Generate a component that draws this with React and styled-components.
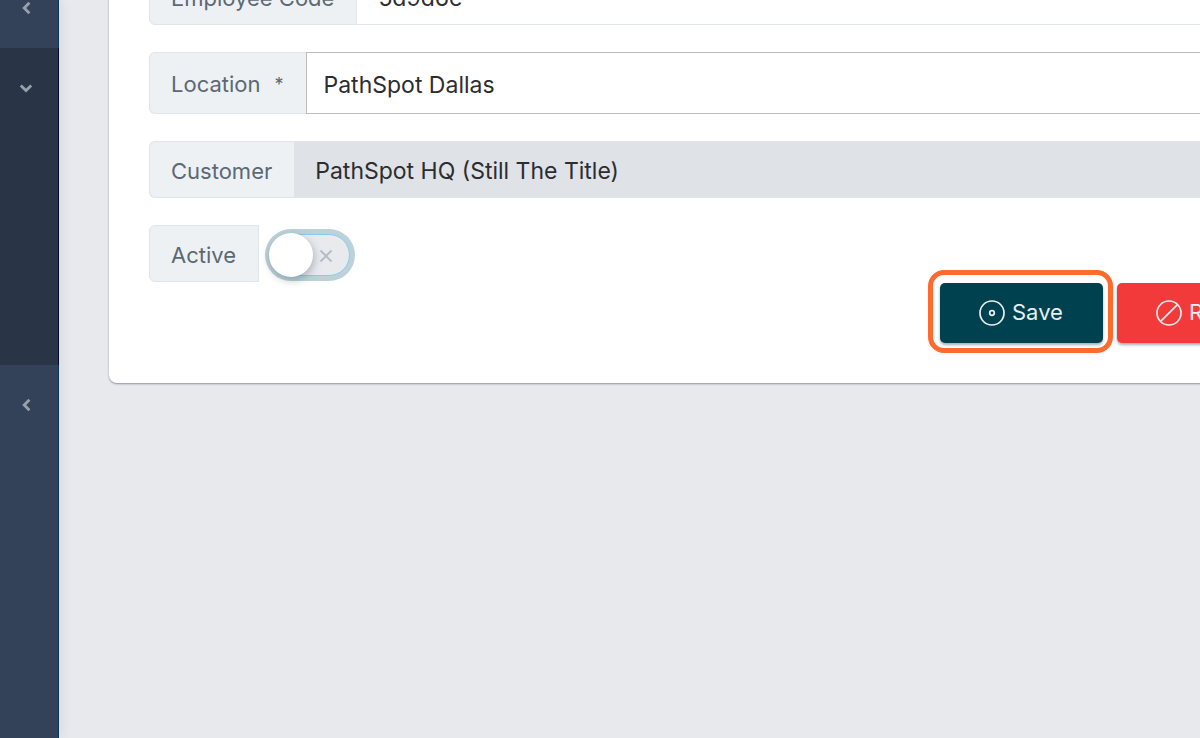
import React from 'react';
import styled, { createGlobalStyle, css } from 'styled-components';

const GlobalStyle = createGlobalStyle`
  * {
    box-sizing: border-box;
  }
  body {
    margin: 0;
    overflow: hidden;
    background-color: #e7e9ed;
    font-family: Inter, "Liberation Sans", sans-serif;
    font-size: 22px;
  }
`;

const Page = styled.div`
  display: flex;
  min-height: 100vh;
`;

const Sidebar = styled.nav`
  display: flex;
  flex-direction: column;
  flex-shrink: 0;
  width: 59px;
  background-color: #344259;
  border-right: 1px solid #0b3552;
  box-shadow: 0 0 12px rgba(60, 75, 100, 0.14);
`;

const SidebarSection = styled.div`
  display: flex;
  flex-direction: column;
  height: ${props => props.height};
  ${props => props.open && css`
    background-color: #2a3447;
    margin-right: -1px;
    border-right: 1px solid #03072b;
  `}
`;

const SidebarToggle = styled.button`
  display: flex;
  align-items: center;
  width: 100%;
  height: 80px;
  padding: 0 0 0 19px;
  border: 0;
  background: none;
  color: #98a0ac;
  flex-shrink: 0;
`;

const UpperSection = styled(SidebarSection)`
  justify-content: flex-end;
`;

const Main = styled.main`
  flex: 1;
  min-width: 0;
  padding-left: 50px;
`;

/* the form is scrolled past its top and right edge */
const Card = styled.form`
  display: flex;
  flex-direction: column;
  gap: 27px;
  margin: -72px -120px 0 0;
  padding: 40px;
  background-color: #fff;
  border-radius: 8px;
  box-shadow: 0 1px 2px rgba(50, 65, 90, 0.5);
`;

const InputGroup = styled.div`
  display: flex;
  height: ${props => (props.tall ? '62px' : '57px')};
`;

const InputLabel = styled.label`
  display: flex;
  align-items: center;
  padding: 2px 22px 0 21px;
  white-space: pre;
  color: #5c6873;
  background-color: #edf1f4;
  border: 1px solid #e0e5e9;
  border-radius: 6px 0 0 6px;
  ${props => props.flush && css`
    border-right: 0;
  `}
`;

const Required = styled.span`
  margin-left: 14px;
  font-size: 18px;
`;

const Input = styled.input`
  flex: 1;
  min-width: 0;
  padding: 2px 21px 0;
  border: 1px solid #e0e5e9;
  border-left: 0;
  border-radius: 0 6px 6px 0;
  background-color: #fff;
  color: #2c2d30;
  font: inherit;
  font-size: 23px;
  &:read-only {
    background-color: #dfe2e7;
  }
`;

const Select = styled.select`
  flex: 1;
  min-width: 0;
  padding: 4px 17px 0;
  appearance: none;
  border: 1px solid #bcbcbc;
  border-radius: 0;
  background-color: #fff;
  color: #2c2d30;
  font: inherit;
  font-size: 23px;
`;

const Switch = styled.span`
  position: relative;
  align-self: center;
  width: 80px;
  height: 42px;
  margin: 2px 0 0 11px;
  border: 1px solid #7fd0f0;
  border-radius: 21px;
  background-color: #e8eaee;
  box-shadow: 0 0 0 5px #bdd2d8;
`;

const SwitchInput = styled.input`
  position: absolute;
  inset: 0;
  width: 100%;
  height: 100%;
  margin: 0;
  opacity: 0;
`;

const SwitchKnob = styled.span`
  position: absolute;
  top: -2px;
  left: -2px;
  width: 44px;
  height: 44px;
  border-radius: 50%;
  background-color: #fff;
  box-shadow: 1px 3px 8px rgba(50, 65, 80, 0.35);
  pointer-events: none;
`;

const SwitchCross = styled.svg`
  position: absolute;
  top: 14px;
  right: 16px;
  pointer-events: none;
`;

const Actions = styled.div`
  display: flex;
  justify-content: flex-end;
  gap: 14px;
  margin-top: -26px;
`;

const Button = styled.button`
  position: relative;
  display: flex;
  align-items: center;
  gap: 7px;
  width: 163px;
  height: 60px;
  padding: 0 0 0 39px;
  border: 0;
  border-radius: 5px;
  background-color: ${props => (props.danger ? '#f23a3a' : '#004150')};
  box-shadow: 0 2px 3px rgba(30, 50, 80, 0.4);
  color: #e9eef0;
  font: inherit;
`;

const ButtonText = styled.span`
  padding-bottom: 3px;
`;

const HighlightRing = styled.span`
  position: absolute;
  inset: -13px -10px -10px -12px;
  border: 5px solid #ff6a2e;
  border-radius: 16px;
  pointer-events: none;
`;

const ChevronLeft = () => (
  <svg width="14" height="14" viewBox="0 0 14 14" fill="none" stroke="currentColor" strokeWidth="2.8">
    <path d="M10.4 1.8 5.2 7l5.2 5.2" />
  </svg>
);

const ChevronDown = () => (
  <svg width="14" height="14" viewBox="0 0 14 14" fill="none" stroke="currentColor" strokeWidth="2.8">
    <path d="M1.8 4.6 7 9.6l5.2-5" />
  </svg>
);

const SaveIcon = () => (
  <svg width="26" height="26" viewBox="0 0 26 26" fill="none" stroke="currentColor" strokeWidth="1.7">
    <circle cx="13" cy="13" r="12" />
    <circle cx="13" cy="13" r="2.3" />
  </svg>
);

const BanIcon = () => (
  <svg width="26" height="26" viewBox="0 0 26 26" fill="none" stroke="currentColor" strokeWidth="1.7">
    <circle cx="13" cy="13" r="12" />
    <path d="M4.8 21.2 21.2 4.8" />
  </svg>
);

const App = () => {
  return (
    <React.Fragment>
      <GlobalStyle />
      <Page>
        <Sidebar>
          <UpperSection height="48px">
            <SidebarToggle aria-label="Expand section"><ChevronLeft /></SidebarToggle>
          </UpperSection>
          <SidebarSection open height="317px">
            <SidebarToggle aria-label="Collapse section"><ChevronDown /></SidebarToggle>
          </SidebarSection>
          <SidebarSection>
            <SidebarToggle aria-label="Expand section"><ChevronLeft /></SidebarToggle>
          </SidebarSection>
        </Sidebar>
        <Main>
          <Card onSubmit={e => e.preventDefault()}>
            <InputGroup>
              <InputLabel htmlFor="code">Employee Code</InputLabel>
              <Input id="code" defaultValue="5d9d6e" />
            </InputGroup>
            <InputGroup tall>
              <InputLabel htmlFor="location" flush>
                Location
                <Required>*</Required>
              </InputLabel>
              <Select id="location">
                <option>PathSpot Dallas</option>
              </Select>
            </InputGroup>
            <InputGroup>
              <InputLabel htmlFor="customer" flush>Customer</InputLabel>
              <Input id="customer" readOnly value="PathSpot HQ (Still The Title)" />
            </InputGroup>
            <InputGroup>
              <InputLabel htmlFor="active">Active</InputLabel>
              <Switch>
                <SwitchInput id="active" type="checkbox" role="switch" />
                <SwitchKnob />
                <SwitchCross width="14" height="14" viewBox="0 0 14 14" stroke="#b5bdc6" strokeWidth="2">
                  <path d="m1.5 1.5 11 11m0-11-11 11" />
                </SwitchCross>
              </Switch>
            </InputGroup>
            <Actions>
              <Button type="submit">
                <SaveIcon />
                <ButtonText>Save</ButtonText>
                <HighlightRing />
              </Button>
              <Button type="reset" danger>
                <BanIcon />
                <ButtonText>Reset</ButtonText>
              </Button>
            </Actions>
          </Card>
        </Main>
      </Page>
    </React.Fragment>
  );
};

export default App;
